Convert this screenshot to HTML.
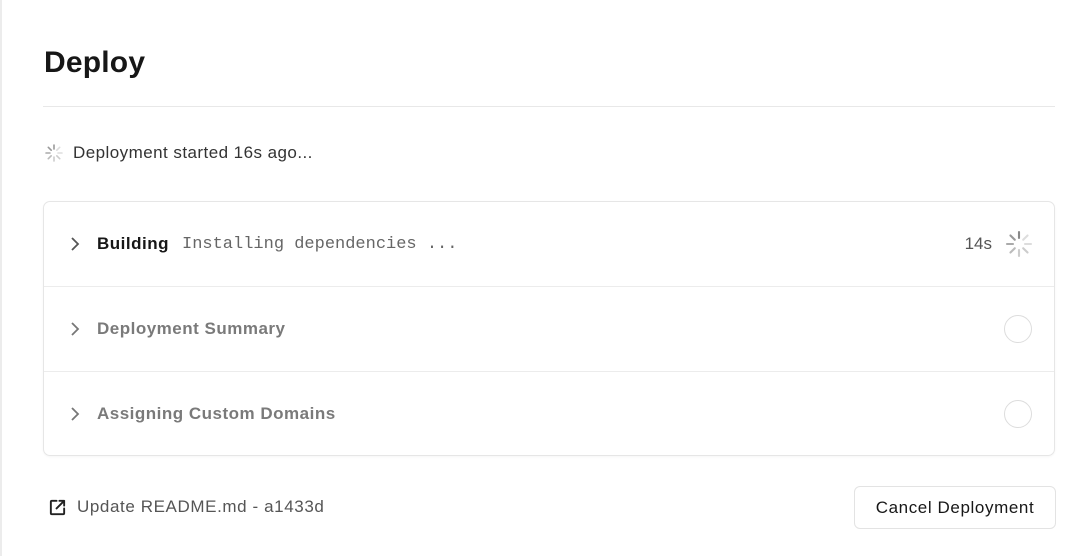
<!DOCTYPE html>
<html><head><style>
body{margin:0;width:1078px;height:556px;background:#fff;font-family:"Liberation Sans",sans-serif;position:relative;overflow:hidden;color:#171717}
.lb{position:absolute;left:0;top:0;width:2px;height:556px;background:#ececec}
h1{position:absolute;left:44px;top:46px;margin:0;font-size:30px;font-weight:bold;letter-spacing:0.2px}
.hr{position:absolute;left:43px;top:106px;width:1012px;height:1px;background:#e8e8e8}
.started{position:absolute;left:44px;top:143px;font-size:17px;letter-spacing:0.45px;color:#333;display:flex;align-items:center;gap:9px}
.card{position:absolute;left:43px;top:201px;width:1010px;height:253px;border:1px solid #e6e6e6;border-radius:7px;box-shadow:0 1px 2px rgba(0,0,0,.04)}
.row{height:84px;border-bottom:1px solid #ececec;display:flex;align-items:center;position:relative}
.row:last-child{border-bottom:none}
.chev{position:absolute;left:25px;top:34px}
.t{position:absolute;left:53px;font-size:17px;letter-spacing:0.5px}
.mono{position:absolute;left:138px;font-family:"Liberation Mono",monospace;font-size:17px;color:#666}
.circ{position:absolute;right:22px;width:28px;height:28px;border:1.5px solid #ddd;border-radius:50%;box-sizing:border-box}
.foot{position:absolute;left:48px;top:497px;font-size:17px;letter-spacing:0.6px;color:#555;display:flex;align-items:center;gap:10px}
.btn{position:absolute;left:854px;top:486px;width:202px;height:43px;border:1px solid #e3e3e3;border-radius:6px;box-sizing:border-box;font-size:17px;letter-spacing:0.6px;display:flex;align-items:center;justify-content:center;color:#171717}
</style></head><body>
<div class="lb"></div>
<h1>Deploy</h1>
<div class="hr"></div>
<div class="started"><svg width="20" height="20" viewBox="0 0 20 20" stroke-linecap="round" stroke-width="1.6"><g stroke="#bbb"><line x1="10" y1="2" x2="10" y2="6" stroke="#999"/><line x1="15.7" y1="4.3" x2="12.8" y2="7.2" stroke="#ddd"/><line x1="18" y1="10" x2="14" y2="10" stroke="#ddd"/><line x1="15.7" y1="15.7" x2="12.8" y2="12.8" stroke="#ccc"/><line x1="10" y1="18" x2="10" y2="14" stroke="#ccc"/><line x1="4.3" y1="15.7" x2="7.2" y2="12.8"/><line x1="2" y1="10" x2="6" y2="10" stroke="#aaa"/><line x1="4.3" y1="4.3" x2="7.2" y2="7.2" stroke="#999"/></g></svg>Deployment started 16s ago...</div>
<div class="card">
<div class="row"><svg class="chev" width="12" height="16" viewBox="0 0 12 16"><path d="M3 2l6 6-6 6" fill="none" stroke="#555" stroke-width="1.8"/></svg><span class="t" style="font-weight:bold;color:#171717">Building</span><span class="mono">Installing dependencies ...</span><span style="position:absolute;right:62px;font-size:17px;color:#555">14s</span><svg style="position:absolute;right:20px" width="30" height="30" viewBox="0 0 20 20" stroke-linecap="round" stroke-width="1.4"><g><line x1="10" y1="2" x2="10" y2="6" stroke="#888"/><line x1="15.7" y1="4.3" x2="12.8" y2="7.2" stroke="#ddd"/><line x1="18" y1="10" x2="14" y2="10" stroke="#ddd"/><line x1="15.7" y1="15.7" x2="12.8" y2="12.8" stroke="#ccc"/><line x1="10" y1="18" x2="10" y2="14" stroke="#ccc"/><line x1="4.3" y1="15.7" x2="7.2" y2="12.8" stroke="#bbb"/><line x1="2" y1="10" x2="6" y2="10" stroke="#aaa"/><line x1="4.3" y1="4.3" x2="7.2" y2="7.2" stroke="#999"/></g></svg></div>
<div class="row"><svg class="chev" width="12" height="16" viewBox="0 0 12 16"><path d="M3 2l6 6-6 6" fill="none" stroke="#777" stroke-width="1.8"/></svg><span class="t" style="font-weight:bold;color:#7a7a7a">Deployment Summary</span><span class="circ"></span></div>
<div class="row"><svg class="chev" width="12" height="16" viewBox="0 0 12 16"><path d="M3 2l6 6-6 6" fill="none" stroke="#777" stroke-width="1.8"/></svg><span class="t" style="font-weight:bold;color:#7a7a7a">Assigning Custom Domains</span><span class="circ"></span></div>
</div>
<div class="foot"><svg width="19" height="19" viewBox="0 0 20 20" fill="none" stroke="#222" stroke-width="2" stroke-linecap="round" stroke-linejoin="round"><path d="M9 3H4a1 1 0 0 0-1 1v12a1 1 0 0 0 1 1h12a1 1 0 0 0 1-1v-5"/><path d="M12 3h5v5M17 3l-8 8"/></svg>Update README.md - a1433d</div>
<div class="btn">Cancel Deployment</div>
</body></html>
